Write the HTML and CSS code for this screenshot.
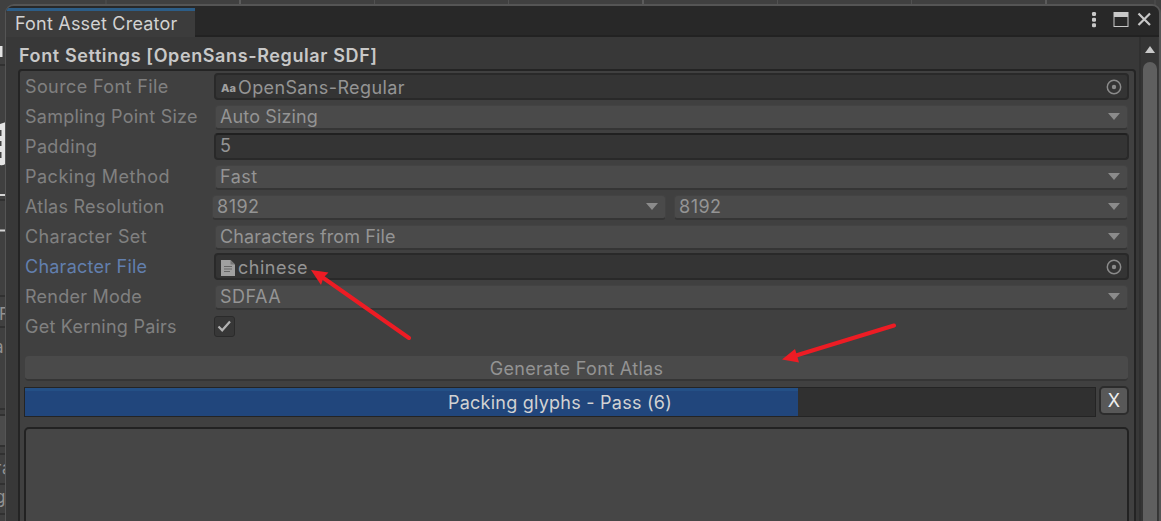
FILE: index.html
```html
<!DOCTYPE html>
<html lang="en">
<head>
<meta charset="utf-8">
<title>Font Asset Creator</title>
<link rel="stylesheet" href="styles.css">
</head>
<body>
<svg class="backdrop" width="1161" height="521" viewBox="0 0 1161 521">
  <path d="M106 0V5M374.500 0V5M508.500 0V5M777.500 0V5M911.500 0V5M1155 0V5" stroke="#515151" fill="none"/>
  <path d="M240 0V5M643 0V5M1046 0V5" stroke="#5b5b5b" stroke-width="2" fill="none"/>
  <path d="M0 46H2.500V57H0ZM0 124L6 122V163Q4 166 0 165Z" fill="#e4e4e4"/>
  <path d="M0 130H1.500V136H0ZM0 141H1.500V146H0ZM0 152H1.500V158H0Z" fill="#444"/>
  <path d="M0 195H6M0 230.500H6" stroke="#d4d4d4" stroke-width="2"/>
  <path d="M0 65H6M0 200H6M0 296H6M0 327H6M0 409H6M0 415H6M0 446H6M0 454H6M0 484H6M0 514H6" stroke="#222"/>
  <path d="M0 416H6V445H0Z" fill="#4b4b4b"/>
  <g class="backdrop-text"><text x="-1" y="320">F</text><text x="-6" y="353">a</text><text x="-5" y="474">ra</text><text x="-5" y="503">g</text></g>
</svg>
<main class="window">
  <header class="titlebar">
    <div class="tab">Font Asset Creator</div>
    <svg class="controls" width="66" height="22" viewBox="0 0 66 22">
      <g fill="#c8c8c8"><rect x="3" y="3" width="4" height="4" rx="1.300"/><rect x="3" y="8.700" width="4" height="4" rx="1.300"/><rect x="3" y="14.300" width="4" height="4" rx="1.300"/><path fill-rule="evenodd" d="M24.500 3H39.500V18H24.500ZM25.500 8V17H38.500V8Z"/></g>
      <path d="M49.500 4.500L61 16M61 4.500L49.500 16" stroke="#c8c8c8" stroke-width="2.200" fill="none"/>
    </svg>
  </header>
  <div class="body">
    <div class="content">
      <h1 class="heading">Font Settings [OpenSans-Regular SDF]</h1>
      <section class="panel">
        <div class="row"><span class="label medium">Source Font File</span><div class="input object"><span class="aa">Aa</span><span class="object-name medium">OpenSans-Regular</span><svg class="picker" width="16" height="16" viewBox="0 0 16 16"><circle cx="8" cy="8" r="6.700"/><circle class="dot" cx="8" cy="8" r="2.200"/></svg></div></div>
        <div class="row"><span class="label">Sampling Point Size</span><div class="select tight">Auto Sizing<i class="caret"></i></div></div>
        <div class="row"><span class="label medium">Padding</span><div class="input">5</div></div>
        <div class="row"><span class="label wide">Packing Method</span><div class="select">Fast<i class="caret"></i></div></div>
        <div class="row"><span class="label">Atlas Resolution</span><div class="pair"><div class="select">8192<i class="caret"></i></div><div class="select">8192<i class="caret"></i></div></div></div>
        <div class="row"><span class="label medium">Character Set</span><div class="select tight">Characters from File<i class="caret"></i></div></div>
        <div class="row"><span class="label active">Character File</span><div class="input object"><svg class="doc" width="14" height="16" viewBox="0 0 14 16"><path fill="#a0a0a0" d="M0 0H9.500L14 4.500V16H0Z"/><path d="M9.500 0V4.500H14" fill="#777"/><path d="M3 6.500H11M3 9H11M3 11.500H9" stroke="#666" stroke-width="1"/></svg><span class="object-name">chinese</span><svg class="picker" width="16" height="16" viewBox="0 0 16 16"><circle cx="8" cy="8" r="6.700"/><circle class="dot" cx="8" cy="8" r="2.200"/></svg></div></div>
        <div class="row"><span class="label">Render Mode</span><div class="select">SDFAA<i class="caret"></i></div></div>
        <div class="row"><span class="label">Get Kerning Pairs</span><div class="check"><svg width="15" height="13" viewBox="0 0 15 13"><path d="M1.500 6.500L5.200 10.300L13 1.500" fill="none" stroke="#b2b2b2" stroke-width="2.200"/></svg></div></div>
        <div class="generate">Generate Font Atlas</div>
        <div class="progress-row">
          <div class="progress"><div class="fill" style="width:72.2%"></div><span class="progress-text">Packing glyphs - Pass (6)</span></div>
          <div class="cancel">X</div>
        </div>
        <div class="preview"></div>
      </section>
    </div>
    <aside class="scrollbar"><i class="up"></i><div class="thumb"></div></aside>
  </div>
</main>
<svg class="arrows" width="1161" height="521" viewBox="0 0 1161 521">
  <g fill="#ed1c24" stroke="#ed1c24"><path d="M409 338L322 277M894 325.500L796 355.500" stroke-width="4" stroke-linecap="round"/><path stroke="none" d="M311 270L328.500 272.500L323.500 277.500L321 285ZM782 359.500L795 349L797 355.500L799 362.500Z"/></g>
</svg>
</body>
</html>
```
FILE: styles.css
```css
* { box-sizing: border-box; }
body { margin: 0; width: 1161px; height: 521px; overflow: hidden; position: relative; background: #404040; font-family: Inter, "Liberation Sans", sans-serif; font-size: 18px; letter-spacing: .5px; color: #949494; }
.backdrop { position: absolute; left: 0; top: 0; }
.backdrop-text { font-size: 17px; fill: #929292; }
.arrows { position: absolute; left: 0; top: 0; pointer-events: none; }
.window { position: relative; margin: 4px 0 0 5px; width: 1156px; height: 530px; border: 2px solid #555; border-left-width: 1px; border-radius: 9px 9px 0 0; background: #383838; overflow: hidden; display: flex; flex-direction: column; }
.titlebar { height: 31px; flex: none; background: #282828; border-bottom: 2px solid #222; display: flex; justify-content: space-between; align-items: flex-start; padding-top: 2px; }
.tab { width: 189px; height: 29px; background: #3c3c3c; border-top: 3px solid #2c5d87; padding-left: 9px; line-height: 26px; letter-spacing: .2px; color: #d2d2d2; white-space: nowrap; }
.controls { margin: 1px 4px 0 0; }
.body { flex: 1; display: flex; }
.content { width: 1133px; padding-left: 12px; }
.heading { margin: 0; height: 32px; padding-left: 1px; line-height: 38px; font-size: 18px; font-weight: 600; letter-spacing: .61px; color: #c8c8c8; white-space: nowrap; }
.panel { width: 1118px; height: 470px; background: #404040; border: 2px solid #242424; border-radius: 4px; padding: 1px 5px 0 4px; }
.row { height: 30px; display: flex; align-items: center; padding-left: 1px; }
.label { width: 189px; flex: none; padding-bottom: 2px; letter-spacing: .24px; color: #808080; white-space: nowrap; }
.medium { letter-spacing: .38px; }
.wide { letter-spacing: .5px; }
.tight { letter-spacing: .12px; }
.active { color: #627fae; }
.input { flex: 1; height: 27px; margin-top: -1px; background: #343434; border: 2px solid #292929; border-top-color: #202020; border-radius: 4px; line-height: 22px; padding-left: 4px; }
.object { display: flex; align-items: center; padding: 0 5px 0 5px; border-top-color: #292929; }
.aa { width: 17px; font-size: 11px; font-weight: 800; letter-spacing: 0; color: #a0a0a0; padding-top: 2px; }
.doc { margin-right: 3px; margin-top: 2px; }
.object-name { padding-top: 2px; }
.picker { margin-left: auto; fill: none; stroke: #8b8b8b; stroke-width: 1.5; }
.dot { fill: #8b8b8b; stroke: none; }
.select { flex: 1; height: 25px; margin: 0 1px; background: #4a4a4a; border: 1px solid #434343; border-bottom: 2px solid #353535; border-radius: 4px; display: flex; align-items: center; justify-content: space-between; padding: 0 7px 0 4px; }
.pair { flex: 1; display: flex; gap: 8px; margin-left: -2px; margin-right: 1px; }
.pair .select { margin: 0; }
.caret { border-left: 6px solid transparent; border-right: 6px solid transparent; border-top: 7px solid #8b8b8b; }
.check { width: 21px; height: 21px; margin-top: -1px; background: #373737; border: 1px solid #2b2b2b; border-radius: 3px; display: flex; align-items: center; justify-content: center; }
.generate { margin: 14px 1px 6px; height: 25px; background: #4a4a4a; border-bottom: 2px solid #353535; border-radius: 4px; text-align: center; line-height: 25px; letter-spacing: .33px; color: #939393; }
.progress-row { display: flex; justify-content: space-between; align-items: flex-start; }
.progress { position: relative; width: 1072px; height: 30px; background: #303030; border: 1px solid #242424; display: flex; }
.fill { background: #21467c; border-top: 3px solid #245086; }
.progress-text { position: absolute; inset: 0; text-align: center; line-height: 30px; letter-spacing: .24px; color: #d2d2d2; }
.cancel { width: 30px; height: 29px; margin-top: -1px; background: #585858; border: 2px solid #2c2c2c; border-radius: 5px; text-align: center; line-height: 26px; color: #eee; letter-spacing: 0; }
.preview { height: 130px; margin-top: 10px; background: #464646; border: 2px solid #222; border-radius: 5px; }
.scrollbar { width: 19px; background: #353535; border-left: 2px solid #303030; display: flex; flex-direction: column; align-items: center; padding-top: 9px; }
.up { border-left: 5px solid transparent; border-right: 5px solid transparent; border-bottom: 7px solid #c8c8c8; }
.thumb { width: 14px; flex: 1; margin-top: 9px; background: #5f5f5f; border-radius: 7px 7px 0 0; }
```
